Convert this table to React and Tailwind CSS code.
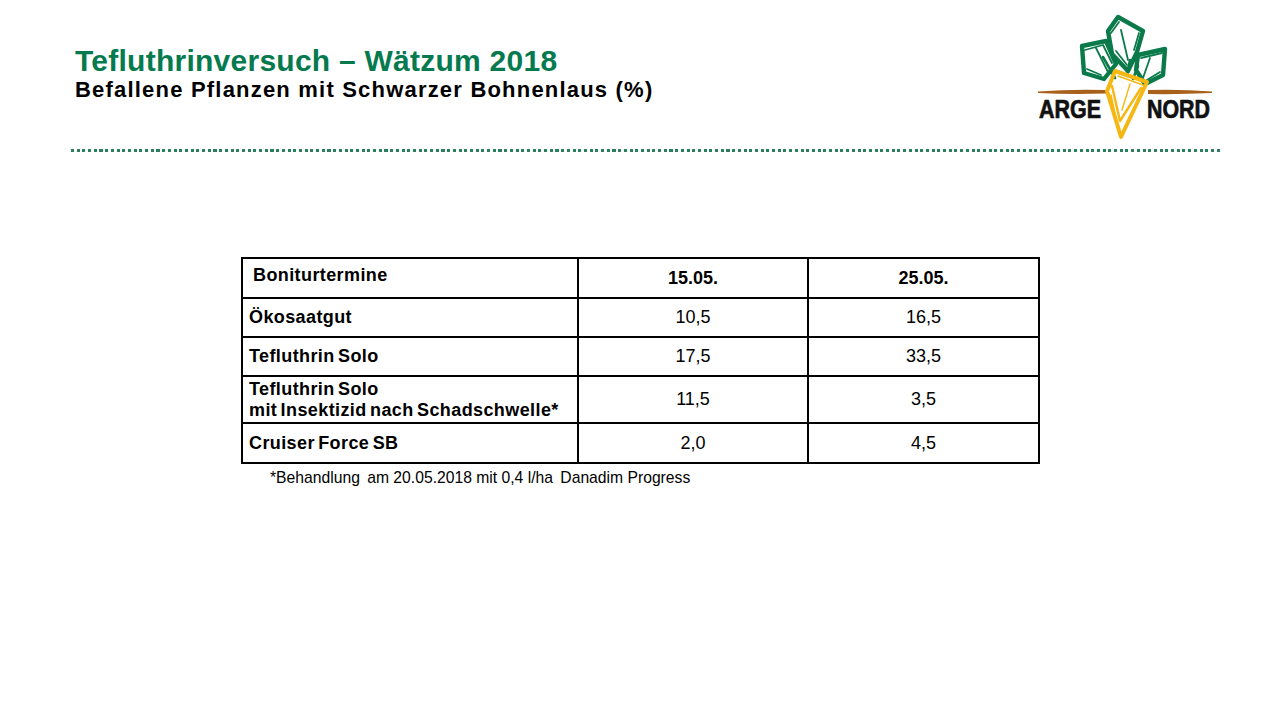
import React from 'react';

const rows = [
  { label: 'Ökosaatgut', a: '10,5', b: '16,5', h: 'h-[39px]' },
  { label: 'Tefluthrin Solo', a: '17,5', b: '33,5', h: 'h-[39px]' },
  { label: ['Tefluthrin Solo', 'mit Insektizid nach Schadschwelle*'], a: '11,5', b: '3,5', h: 'h-[47px]' },
  { label: 'Cruiser Force SB', a: '2,0', b: '4,5', h: 'h-[40px]' },
];

function Logo() {
  const green = '#0b7a4b';
  const yellow = '#f6b712';
  const brown = '#a8611b';
  return (
    <svg width="185" height="130" viewBox="1033 12 185 130" className="ml-auto mt-[12px] shrink-0 overflow-visible">
      {/* ground line */}
      <path d="M1038 91.5 Q1070 89 1106 90 L1106 93.5 Q1070 94.5 1038 93 Z" fill={brown} />
      <path d="M1148 90 Q1180 89 1212 91.5 L1212 93 Q1180 94.5 1148 94 Z" fill={brown} />
      {/* leaves */}
      <g fill="none" stroke={green} strokeWidth="4.4" strokeLinejoin="round" strokeLinecap="round">
        <path d="M1082 46 L1106 41 L1116 64 L1104 79 L1084 73 Z" />
        <path d="M1085 50 L1103 45 L1112 63 M1087 69 L1101 75 M1096 48 L1108 72" strokeWidth="1.8" />
        <path d="M1118 17 L1143 31 L1137 52 L1128 71 L1112 54 L1108 31 Z" />
        <path d="M1111 33 L1119 22 M1116 51 L1127 65 M1139 33 L1134 50 M1121 30 L1128 60" strokeWidth="1.8" />
        <path d="M1138 55 L1165 49 L1163 75 L1145 84 L1136 70 Z" />
        <path d="M1141 58 L1162 53 M1160 72 L1147 80 M1150 58 L1143 78" strokeWidth="1.8" />
        <path d="M1103 57 L1115 78 M1130 60 L1127 76 M1138 66 L1133 79" strokeWidth="2.6" />
      </g>
      {/* carrot */}
      <g fill="none" stroke={yellow} strokeWidth="4" strokeLinejoin="round" strokeLinecap="round">
        <path d="M1115 71 L1147 82 L1121 137 L1107 91 Z" />
        <path d="M1112 86 L1120 121 L1141 88" strokeWidth="2.4" />
        <path d="M1118 76 L1143 85 M1111 95 L1118 128 M1130 84 L1122 110" strokeWidth="1.4" />
      </g>
      <text x="1039" y="118" fontFamily="'Liberation Sans', Arial, sans-serif" fontWeight="700" fontSize="25" textLength="62" lengthAdjust="spacingAndGlyphs" fill="#111" stroke="#111" strokeWidth="0.7">ARGE</text>
      <text x="1147" y="118" fontFamily="'Liberation Sans', Arial, sans-serif" fontWeight="700" fontSize="25" textLength="63" lengthAdjust="spacingAndGlyphs" fill="#111" stroke="#111" strokeWidth="0.7">NORD</text>
    </svg>
  );
}

export default function App() {
  return (
    <div className="w-[1280px] h-[720px] bg-white overflow-hidden font-['Liberation_Sans',Arial,sans-serif] text-black">
      <div className="flex pl-[75px] pr-[62px]">
        <div className="pt-[46px]">
          <h1 className="text-[30px] leading-none font-bold text-[#047a4e] tracking-[0.25px]">
            Tefluthrinversuch – Wätzum 2018
          </h1>
          <h2 className="mt-[3px] text-[22px] leading-none font-bold tracking-[1.2px]">
            Befallene Pflanzen mit Schwarzer Bohnenlaus (%)
          </h2>
        </div>
        <Logo />
      </div>

      <div className="ml-[71px] mt-[7px] w-[1149px] h-[3px] bg-[repeating-linear-gradient(90deg,#2b7f5c_0px,#2b7f5c_3px,transparent_3px,transparent_5.7px)]" />

      <div className="ml-[241px] mt-[105px] w-[798px]">
        <table className="w-[798px] border-collapse border-2 border-black table-fixed">
          <colgroup>
            <col className="w-[336px]" />
            <col className="w-[230px]" />
            <col className="w-[231px]" />
          </colgroup>
          <tbody>
            <tr className="h-[40px]">
              <td className="border-2 border-black pl-[10px] pb-[6px] align-middle text-[18px] font-bold tracking-[0.4px]">
                Boniturtermine
              </td>
              <td className="border-2 border-black text-center text-[18px] font-bold">15.05.</td>
              <td className="border-2 border-black text-center text-[18px] font-bold">25.05.</td>
            </tr>
            {rows.map((r, i) => (
              <tr key={i} className={r.h}>
                <td className="border-2 border-black pl-[6px] align-middle text-[18px] font-bold tracking-[0.4px] [word-spacing:-2px] leading-[21px]">
                  {Array.isArray(r.label) ? (
                    <>
                      <div>{r.label[0]}</div>
                      <div>{r.label[1]}</div>
                    </>
                  ) : (
                    r.label
                  )}
                </td>
                <td className="border-2 border-black text-center text-[18px]">{r.a}</td>
                <td className="border-2 border-black text-center text-[18px]">{r.b}</td>
              </tr>
            ))}
          </tbody>
        </table>
        <p className="mt-[5px] pl-[29px] text-[15.7px] leading-[18px]">
          *Behandlung <span className="ml-[3px]">am</span> 20.05.2018 mit 0,4 l/ha <span className="ml-[3px]">Danadim</span> Progress
        </p>
      </div>
    </div>
  );
}
